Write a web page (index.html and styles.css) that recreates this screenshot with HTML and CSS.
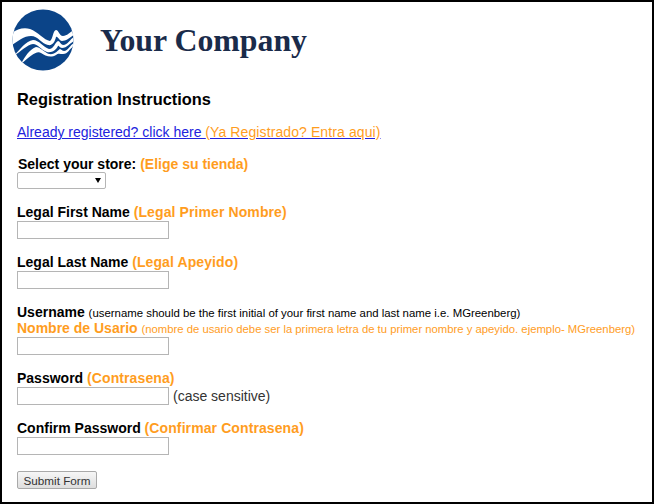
FILE: index.html
```html
<!DOCTYPE html>
<html lang="en">
<head>
    <meta charset="UTF-8">
    <title>Registration</title>
    <link rel="stylesheet" href="styles.css">
</head>
<body>
    <div class="frame">
        <div class="header">
            <svg class="logo" width="62" height="62" viewBox="0 0 62 62">
                <defs>
                    <clipPath id="disc"><circle cx="31" cy="31" r="30.5"/></clipPath>
                </defs>
                <circle cx="31" cy="31" r="30.5" fill="#0b4488"/>
                <g clip-path="url(#disc)" fill="#fff">
                    <path d="M0 24 C5 20 12 18 18 20 C26 23 32 31 38 32 C41 30 41 21 44 21 C47 21 47 27 51 27 C55 27 58 23 62 21 L62 26 C57 29 54 32 50 32 C47 32 46 27 44 28 C43 32 41 37 36 36 C30 35 26 27 19 27 C12 27 6 32 0 36 Z"/>
                    <path d="M2 47 C8 40 14 32 21 31 C27 31 31 38 37 40 C42 40 43 33 46 32 C48 32 48 35 51 36 C56 36 58 30 62 28 L62 32 C58 34 55 39 50 39 C47 39 47 36 46 37 C44 41 40 44 35 43 C29 41 26 35 21 35 C15 36 9 42 2 47 Z"/>
                    <path d="M9 55 C13 47 18 40 24 38 C28 38 32 43 37 45 C43 46 46 41 48 40 C50 41 51 42 52 42 C56 42 58 36 62 34 L62 37 C57 40 56 45 51 45 C48 45 46 44 44 46 C39 49 33 47 29 44 C25 41 18 47 9 55 Z"/>
                </g>
            </svg>
            <h1 class="company">Your Company</h1>
        </div>

        <form class="reg-form">
            <h2>Registration Instructions</h2>
            <p class="login-link"><a href="#">Already registered? click here <span class="es">(Ya Registrado? Entra aqui)</span></a></p>

            <div class="field field-store">
                <label for="store">Select your store: <span class="es">(Elige su tienda)</span></label>
                <div class="store-wrap">
                    <select id="store" class="store-select"><option></option></select>
                </div>
            </div>

            <div class="field">
                <label for="first">Legal First Name <span class="es">(Legal Primer Nombre)</span></label>
                <input type="text" id="first">
            </div>

            <div class="field">
                <label for="last">Legal Last Name <span class="es">(Legal Apeyido)</span></label>
                <input type="text" id="last">
            </div>

            <div class="field">
                <label for="username">Username <small>(username should be the first initial of your first name and last name i.e. MGreenberg)</small></label>
                <label for="username" class="es">Nombre de Usario <small>(nombre de usario debe ser la primera letra de tu primer nombre y apeyido. ejemplo- MGreenberg)</small></label>
                <input type="text" id="username">
            </div>

            <div class="field">
                <label for="password">Password <span class="es">(Contrasena)</span></label>
                <div class="pw-row">
                    <input type="password" id="password">
                    <span class="hint">(case sensitive)</span>
                </div>
            </div>

            <div class="field">
                <label for="confirm">Confirm Password <span class="es">(Confirmar Contrasena)</span></label>
                <input type="password" id="confirm">
            </div>

            <button type="button" class="submit">Submit Form</button>
        </form>
    </div>
</body>
</html>
```

FILE: styles.css
```css
html, body {
    margin: 0;
    padding: 0;
}
body {
    font-family: "Liberation Sans", Arial, sans-serif;
    font-size: 14px;
    color: #000;
    background-color: #fff;
}
.frame {
    box-sizing: border-box;
    width: 654px;
    height: 504px;
    border: 2px solid #000;
    overflow: hidden;
}
.header {
    display: flex;
    align-items: center;
    padding: 7px 0 0 10px;
    height: 62px;
}
.logo {
    display: block;
}
.company {
    margin: 2px 0 0 26px;
    font-family: "Liberation Serif", "Times New Roman", serif;
    font-size: 31.8px;
    font-weight: bold;
    color: #1a2b4a;
}
.reg-form {
    padding: 18px 0 0 15px;
}
h2 {
    margin: 0;
    font-size: 16.4px;
    line-height: 20px;
    font-weight: bold;
}
.login-link {
    margin: 14px 0 0;
    font-size: 14px;
    line-height: 18px;
}
.login-link a {
    color: #2222dd;
    text-decoration-color: #2222dd;
}
.login-link .es {
    letter-spacing: 0.1px;
}
.es {
    color: #ff9d1e;
}
.field {
    margin-top: 15px;
}
.field-store label {
    padding-left: 1px;
}
label {
    display: block;
    font-size: 14px;
    line-height: 16px;
    font-weight: bold;
    white-space: nowrap;
}
label .es {
    letter-spacing: 0.1px;
}
.field-store .es {
    letter-spacing: 0;
}
small {
    font-size: 11.4px;
    line-height: 1;
    font-weight: normal;
}
.es small {
    font-size: 11.3px;
}
input {
    display: block;
    box-sizing: border-box;
    width: 152px;
    height: 18px;
    margin: 1px 0 0;
    padding: 1px 2px;
    border: 1px solid #b5b5b5;
    background-color: #fff;
}
.store-wrap {
    position: relative;
    width: 89px;
}
.store-wrap::after {
    content: "";
    position: absolute;
    top: 6px;
    left: 78px;
    border-top: 5px solid #000;
    border-left: 3px solid transparent;
    border-right: 3px solid transparent;
}
.store-select {
    display: block;
    appearance: none;
    width: 89px;
    height: 17px;
    border: 1px solid #b5b5b5;
    border-radius: 2px;
    background-color: #fff;
    font-size: 12px;
}
.pw-row {
    display: flex;
    align-items: center;
    gap: 4px;
}
.hint {
    font-size: 14px;
    color: #333;
}
.submit {
    display: block;
    box-sizing: border-box;
    width: 80px;
    height: 18px;
    margin-top: 16px;
    padding: 0;
    border: 1px solid #a9a9a9;
    border-radius: 2px;
    background: linear-gradient(#f6f6f6, #dedede);
    font-family: "Liberation Sans", Arial, sans-serif;
    font-size: 11.7px;
    color: #333;
}
```
